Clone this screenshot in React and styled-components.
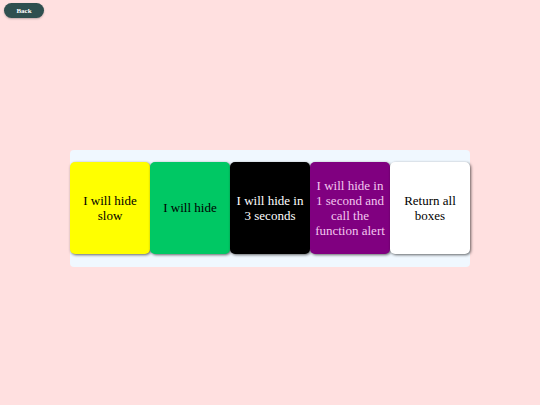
import React from "react";
import styled, { createGlobalStyle } from "styled-components";

const GlobalStyle = createGlobalStyle`
  html, body {
    margin: 0;
    padding: 0;
    background: #ffe0e0;
  }
`;

const Page = styled.div`
  width: 540px;
  height: 405px;
  display: flex;
  flex-direction: column;
  font-family: "Liberation Serif", serif;
`;

const TopBar = styled.div`
  display: flex;
  padding: 3px 4px;
`;

const BackButton = styled.button`
  background: #2f4f4f;
  color: #ffffff;
  border: none;
  border-radius: 999px;
  width: 40px;
  height: 15px;
  font-family: "Liberation Serif", serif;
  font-weight: bold;
  font-size: 7px;
  padding: 0;
  cursor: pointer;
  box-shadow: 0 1px 2px rgba(0, 0, 0, 0.25);
`;

const Main = styled.div`
  flex: 1;
  display: flex;
  align-items: center;
  justify-content: center;
  padding-bottom: 10px;
`;

const Container = styled.div`
  display: flex;
  width: 400px;
  padding: 12px 0 13px;
  background: #f0f8ff;
  border-radius: 4px;
`;

const Box = styled.div`
  width: 80px;
  height: 92px;
  box-sizing: border-box;
  background: ${(p) => p.$bg};
  color: ${(p) => p.$fg};
  border-radius: 5px;
  box-shadow: 1px 1px 3px rgba(0, 0, 0, 0.6);
  display: flex;
  align-items: center;
  justify-content: center;
  text-align: center;
  font-family: "Liberation Serif", serif;
  font-size: 13px;
  line-height: 15px;
  padding: 0 3px;
`;

const boxes = [
  { text: "I will hide slow", bg: "#ffff00", fg: "#000000" },
  { text: "I will hide", bg: "#00c864", fg: "#000000" },
  { text: "I will hide in 3 seconds", bg: "#000000", fg: "#ffffff" },
  { text: "I will hide in 1 second and call the function alert", bg: "#800080", fg: "#f2c6ee" },
  { text: "Return all boxes", bg: "#ffffff", fg: "#000000" },
];

export default function App() {
  return (
    <Page>
      <GlobalStyle />
      <TopBar>
        <BackButton>Back</BackButton>
      </TopBar>
      <Main>
        <Container>
          {boxes.map((b) => (
            <Box key={b.text} $bg={b.bg} $fg={b.fg}>
              {b.text}
            </Box>
          ))}
        </Container>
      </Main>
    </Page>
  );
}
